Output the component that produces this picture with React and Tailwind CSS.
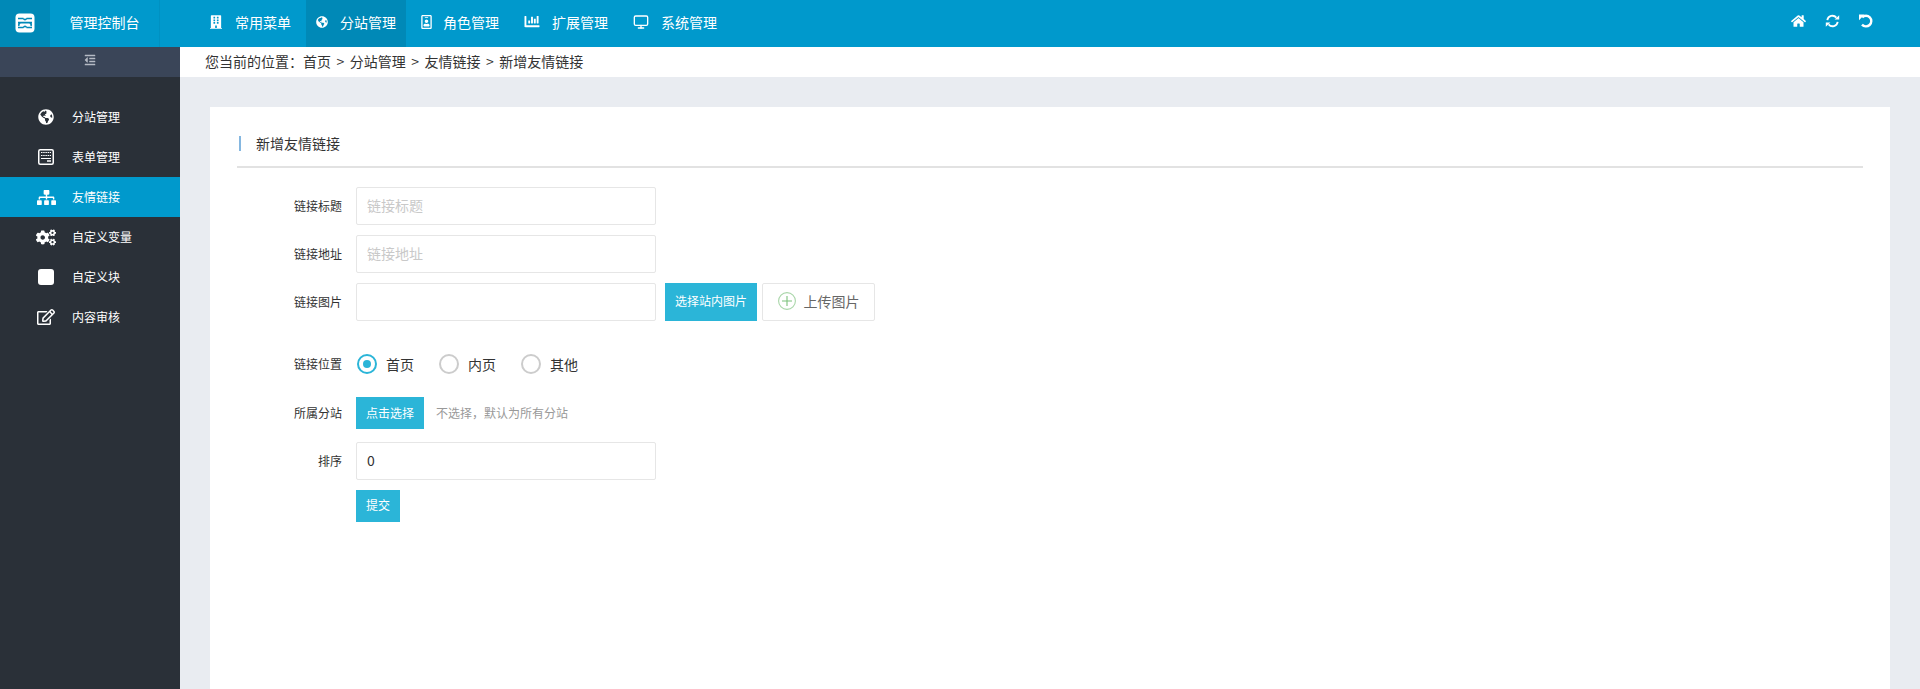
import React from "react";
import { FaBuilding, FaGlobeAmericas, FaRegIdBadge, FaChartBar, FaHome, FaOutdent, FaSitemap, FaCogs, FaRegEdit } from "react-icons/fa";
import { LuMonitor } from "react-icons/lu";

const navItems = [
  { icon: <FaBuilding className="w-3 h-[14px]" />, label: "常用菜单", gap: "mr-[13px]" },
  { icon: <FaGlobeAmericas className="w-3 h-3" />, label: "分站管理", active: true, gap: "mr-3" },
  { icon: <FaRegIdBadge className="w-[11px] h-[14px]" />, label: "角色管理", gap: "mr-[11px]" },
  { icon: <FaChartBar className="w-4 h-[15px]" />, label: "扩展管理", gap: "mr-3" },
  { icon: <LuMonitor className="w-4 h-4" />, label: "系统管理", gap: "mr-3" },
];

function FormIcon() {
  return (
    <svg width="16" height="16" viewBox="0 0 16 16">
      <rect x="0.75" y="0.75" width="14.5" height="14.5" rx="1.5" fill="none" stroke="currentColor" strokeWidth="1.5" />
      <path d="M3 3.5h10M3 6.5h10" stroke="currentColor" strokeWidth="1.2" strokeDasharray="1.5 0.7" />
      <path d="M3 9.5h10" stroke="currentColor" strokeWidth="1" />
      <path d="M9 12h4" stroke="currentColor" strokeWidth="1.5" />
    </svg>
  );
}

const sideItems = [
  { icon: <FaGlobeAmericas className="w-4 h-4" />, label: "分站管理" },
  { icon: <FormIcon />, label: "表单管理" },
  { icon: <FaSitemap className="w-[19px] h-[17px]" />, label: "友情链接", active: true },
  { icon: <FaCogs className="w-5 h-[17px]" />, label: "自定义变量" },
  { icon: <span className="block w-4 h-4 rounded-[3px] bg-white" />, label: "自定义块" },
  { icon: <FaRegEdit className="w-[18px] h-4" />, label: "内容审核" },
];

function Logo() {
  return (
    <svg width="20" height="20" viewBox="0 0 20 20">
      <rect x="0.5" y="0.5" width="19" height="19" rx="4" fill="#fff" />
      <path d="M3 5.5h5.5M11.5 5.5H17M8.5 5.5c.6 1.6 2.4 1.6 3 0M3 9.6h14M6 9.6c-2 .6-2.6 2-2 3.4M14 9.6c2 .6 2.6 2 2 3.4M3 14.5h5.5M11.5 14.5H17M8.5 14.5c.6-1.6 2.4-1.6 3 0" stroke="#0089b7" strokeWidth="1.6" fill="none" />
    </svg>
  );
}

function Field({ label, children, className = "" }) {
  return (
    <div className={`flex items-center ${className}`}>
      <label className="w-[119px] pr-[14px] text-right text-xs text-[#333] shrink-0">{label}</label>
      {children}
    </div>
  );
}

function Input({ placeholder, defaultValue }) {
  return (
    <input
      placeholder={placeholder}
      defaultValue={defaultValue}
      className="w-[300px] h-[38px] border border-[#e6e6e6] rounded-[2px] bg-white px-[10px] pb-[2px] text-sm text-[#333] outline-none placeholder:text-[#c9c9c9]"
    />
  );
}

function Radio({ label, checked }) {
  return (
    <label className="flex items-center mr-[25px]">
      <span className={`w-5 h-5 rounded-full border-2 flex items-center justify-center ${checked ? "border-[#2bb5d8]" : "border-[#cccccc]"}`}>
        {checked && <span className="w-2 h-2 rounded-full bg-[#2bb5d8]" />}
      </span>
      <span className="ml-[9px] text-sm text-[#333]">{label}</span>
    </label>
  );
}

function Crumbs({ items }) {
  return items.map((c, i) => (
    <React.Fragment key={c}>
      {i > 0 && <span className="mx-[5.5px]">&gt;</span>}
      <span>{c}</span>
    </React.Fragment>
  ));
}

export default function App() {
  return (
    <div className="flex flex-col h-[689px] overflow-hidden bg-[#e9ecf1] font-['Noto_Sans_CJK_SC','Liberation_Sans',sans-serif]">
      <header className="flex h-[47px] shrink-0 bg-[#0099cc] text-white">
        <div className="w-[50px] flex items-center justify-center bg-[#0089b7] pb-[2px]"><Logo /></div>
        <div className="w-[110px] flex items-center justify-center border-r border-[#0091c2] text-sm pb-1">管理控制台</div>
        <nav className="flex ml-10">
          {navItems.map((n) => (
            <a key={n.label} className={`flex items-center px-[10px] mr-[5px] pb-1 text-sm ${n.active ? "bg-[#0089b7]" : ""}`}>
              <span className={n.gap}>{n.icon}</span>
              {n.label}
            </a>
          ))}
        </nav>
        <div className="ml-auto flex items-center gap-[19px] pr-[47px] pb-[6px]">
          <FaHome className="w-[15px] h-[14px]" />
          <svg width="15" height="14" viewBox="0 0 15 14" fill="none">
            <path d="M2.3 6.2A5.2 5.2 0 0 1 11.4 3.6" stroke="#fff" strokeWidth="1.8" />
            <path d="M12.7 7.8A5.2 5.2 0 0 1 3.6 10.4" stroke="#fff" strokeWidth="1.8" />
            <path d="M9.6 5.4h4.6V1.2zM5.4 8.6H.8v4.2z" fill="#fff" />
          </svg>
          <svg width="14" height="14" viewBox="0 0 14 14" fill="none">
            <path d="M3.2 3.4A5.3 5.3 0 1 1 3 10.6" stroke="#fff" strokeWidth="2.4" />
            <path d="M0 0.6h5.6L0 6.2z" fill="#fff" />
          </svg>
        </div>
      </header>
      <div className="flex flex-1 min-h-0">
        <aside className="w-[180px] shrink-0 bg-[#2a3038] text-white">
          <div className="h-[30px] flex items-center justify-center bg-[#3a4558] text-[#b5bac4] pb-[4px]">
            <FaOutdent className="w-[14px] h-3" />
          </div>
          <ul className="pt-5">
            {sideItems.map((s) => (
              <li key={s.label} className={`flex items-center h-10 text-xs ${s.active ? "bg-[#0099cc]" : ""}`}>
                <span className="ml-9 w-5 mr-4 flex items-center justify-center shrink-0">{s.icon}</span>
                {s.label}
              </li>
            ))}
          </ul>
        </aside>
        <main className="flex-1 min-w-0 flex flex-col">
          <div className="h-[30px] shrink-0 bg-white flex items-center pl-[25px] pb-[2px] text-sm text-[#333] whitespace-pre">
            <span>您当前的位置：</span>
            <Crumbs items={["首页", "分站管理", "友情链接", "新增友情链接"]} />
          </div>
          <div className="flex-1 min-h-0 pt-[30px] px-[30px]">
            <section className="h-full bg-white px-[27px] pt-[29px]">
              <div className="h-[30px] border-b-2 border-[#e2e2e2] box-content">
                <h2 className="ml-[2px] border-l-2 border-[#85b7e0] h-[15px] pl-[15px] pb-[2px] flex items-center text-sm text-[#333] font-normal">新增友情链接</h2>
              </div>
              <form className="flex flex-col mt-[19px]">
                <Field label="链接标题" className="mb-[10px]"><Input placeholder="链接标题" /></Field>
                <Field label="链接地址" className="mb-[10px]"><Input placeholder="链接地址" /></Field>
                <Field label="链接图片" className="mb-[33px]">
                  <Input />
                  <button type="button" className="ml-[9px] w-[92px] h-[38px] pb-[2px] bg-[#2bb5d8] text-white text-xs">选择站内图片</button>
                  <button type="button" className="ml-[5px] w-[113px] h-[38px] pb-[2px] border border-[#e6e6e6] rounded-[2px] bg-white text-sm text-[#666] flex items-center justify-center">
                    <svg width="18" height="18" viewBox="0 0 18 18" className="mr-[8px]">
                      <circle cx="9" cy="9" r="8.4" fill="none" stroke="#a9d6a9" strokeWidth="1.1" />
                      <path d="M9 4v10M4 9h10" stroke="#7cc17c" strokeWidth="1.1" />
                    </svg>
                    上传图片
                  </button>
                </Field>
                <Field label="链接位置" className="mb-[23px]">
                  <div className="flex items-center ml-[1px]">
                    <Radio label="首页" checked />
                    <Radio label="内页" />
                    <Radio label="其他" />
                  </div>
                </Field>
                <Field label="所属分站" className="mb-[13px]">
                  <button type="button" className="w-[68px] h-8 bg-[#2bb5d8] text-white text-xs">点击选择</button>
                  <span className="ml-3 text-xs text-[#999]">不选择，默认为所有分站</span>
                </Field>
                <Field label="排序" className="mb-[10px]"><Input defaultValue="0" /></Field>
                <div className="pl-[119px]">
                  <button type="button" className="w-11 h-8 pb-[2px] bg-[#2bb5d8] text-white text-xs">提交</button>
                </div>
              </form>
            </section>
          </div>
        </main>
      </div>
    </div>
  );
}
